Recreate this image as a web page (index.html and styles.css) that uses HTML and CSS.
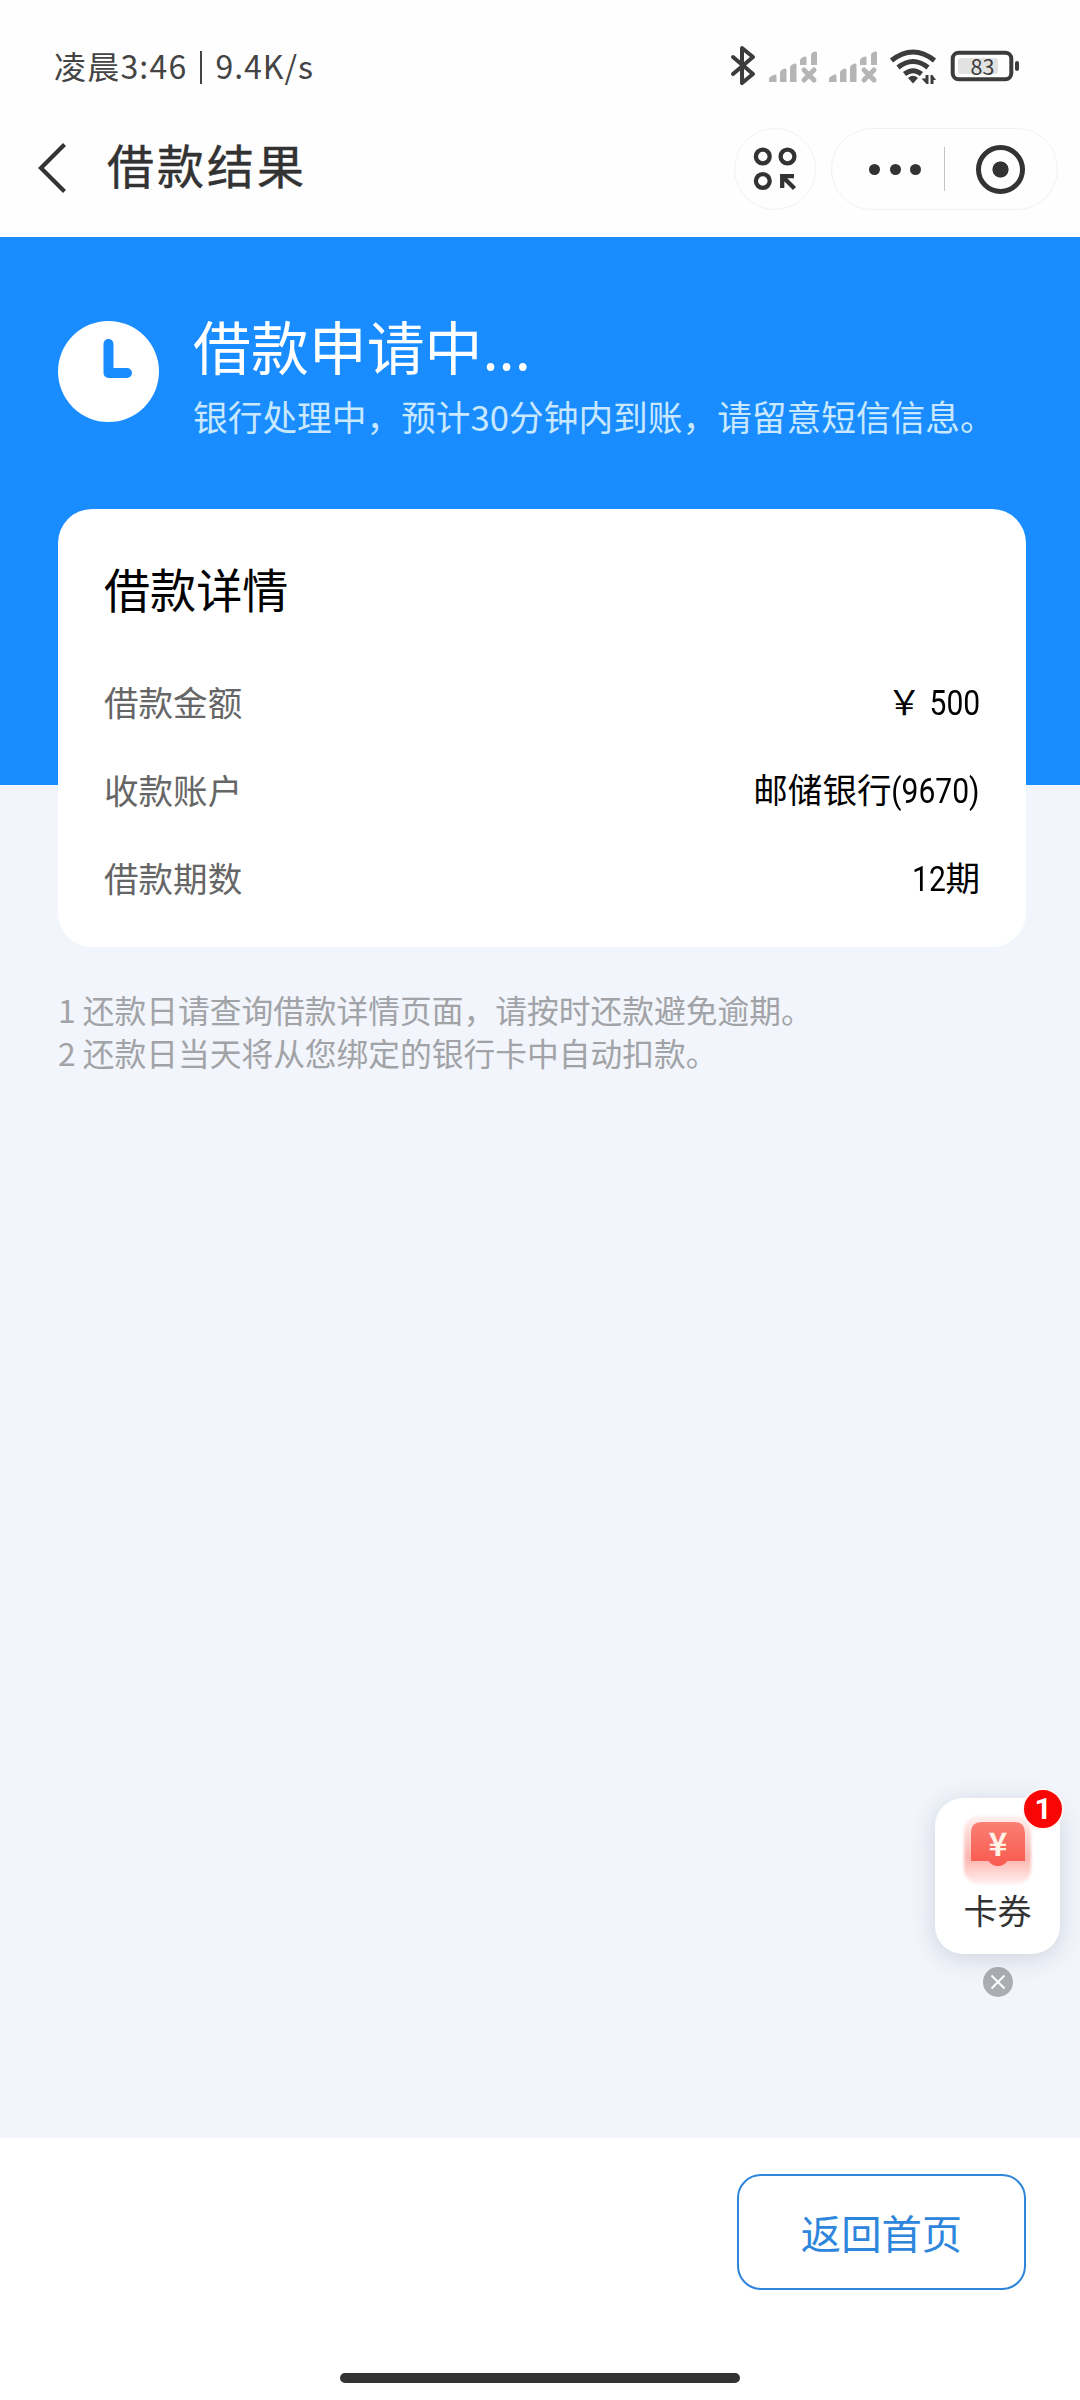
FILE: index.html
```html
<!DOCTYPE html>
<html lang="zh-CN">
<head>
<meta charset="utf-8">
<title>借款结果</title>
<link rel="stylesheet" href="styles.css">
</head>
<body>
<div class="screen">
  <header class="top">
    <div class="status">
      <div class="status-text"><span class="period">凌晨</span><span class="time">3:46</span><span class="bar"></span><span class="rate">9.4K/s</span></div>
      <svg class="status-icons" width="292" height="44" viewBox="728 45 292 44" fill="none">
        <path d="M733 57L753 74L742 83V48L753 57L733 74" stroke="#3c3c3c" stroke-width="4" stroke-linejoin="round" stroke-linecap="round"/>
        <g id="sig" fill="#b5b5b5">
          <path d="M769 82v-3q0-1.500 1.500-2.500l4-2q2-.5 2 1.500v6zM780 82v-9q0-2 1.500-3l3-1.500q2-.5 2 1.500v12zM790 82v-14q0-2 1.500-3l3-1.500q2-.5 2 1.500v17zM800 65v-4q0-2 1.500-3l3-1.500q2-.5 2 1.500v7zM811 65v-10q0-1.500 1.500-2.500l2.500-1q2-.5 2 1.500v12z"/>
          <path d="M804 70L814 80M814 70L804 80" stroke="#b5b5b5" stroke-width="5" stroke-linecap="round"/>
        </g>
        <use href="#sig" x="60"/>
        <g stroke="#3c3c3c" stroke-width="5">
          <path d="M891.500 60.500Q913 43.500 934.500 60.500M898 67.500Q913 55.500 928 67.500M904.500 74Q913 67.500 921.500 74"/>
        </g>
        <path d="M908 78Q913 73.500 918 78L913 83.500Z" fill="#3c3c3c"/>
        <path d="M925.500 75H928.500V84H926.500L921.500 78.500H925.500ZM930.500 75H932.500L936 80H933.500V84H930.500Z" fill="#3c3c3c"/>
        <rect x="958" y="58" width="40" height="16" rx="3" fill="#e2e2e2"/>
        <rect x="952.700" y="52.700" width="58.600" height="26.600" rx="6" stroke="#3c3c3c" stroke-width="4"/>
        <rect x="1015" y="61" width="4" height="10" rx="2" fill="#3c3c3c"/>
        <text x="982.500" y="75" class="battery" text-anchor="middle">83</text>
      </svg>
    </div>
    <nav class="nav">
      <svg class="back" width="30" height="50" viewBox="37 143 30 50" fill="none"><path d="M64.500 144.500L41 168L64.500 191.500" stroke="#333" stroke-width="4.200"/></svg>
      <h1>借款结果</h1>
      <span class="round">
        <svg viewBox="753 147 44 44" fill="none" stroke="#333" stroke-width="4.300">
          <circle cx="762.800" cy="156.500" r="6.900"/><circle cx="787.500" cy="156.500" r="6.900"/><circle cx="762.800" cy="181" r="6.900"/>
          <path d="M782.200 188V176.200H794M783 177L794.500 188.500"/>
        </svg>
      </span>
      <span class="capsule">
        <span class="dots"><i></i><i></i><i></i></span>
        <span class="rule"></span>
        <span class="target"></span>
      </span>
    </nav>
  </header>

  <main class="content">
    <section class="result">
      <svg width="101" height="101" viewBox="0 0 101 101"><circle cx="50.500" cy="50.500" r="50.500" fill="#fff"/><path d="M50.500 23V52H69" fill="none" stroke="#198cff" stroke-width="10" stroke-linecap="round" stroke-linejoin="round"/></svg>
      <div class="result-text">
        <h2>借款申请中...</h2>
        <p>银行处理中，预计30分钟内到账，请留意短信信息。</p>
      </div>
    </section>
    <section class="card">
      <h3>借款详情</h3>
      <dl>
        <div><dt>借款金额</dt><dd>￥ <span class="num amount">500</span></dd></div>
        <div><dt>收款账户</dt><dd>邮储银行<span class="num account">(9670)</span></dd></div>
        <div><dt>借款期数</dt><dd><span class="num terms">12</span>期</dd></div>
      </dl>
    </section>
    <div class="notes">
      <p>1 还款日请查询借款详情页面，请按时还款避免逾期。</p>
      <p>2 还款日当天将从您绑定的银行卡中自动扣款。</p>
    </div>
    <aside class="float">
      <div class="coupon">
        <span class="badge">1</span>
        <svg width="77" height="77" viewBox="-4 -4 77 77">
          <defs>
            <linearGradient id="red" x1="0" y1="0" x2="0" y2="1"><stop offset="0" stop-color="#fa7f72"/><stop offset="1" stop-color="#f85a4f"/></linearGradient>
            <linearGradient id="pink" x1="0" y1="0" x2="0" y2="1"><stop offset="0" stop-color="#fff1ef"/><stop offset=".62" stop-color="#fcb4ae"/><stop offset="1" stop-color="#fff0ee"/></linearGradient>
            <filter id="soft" x="-10%" y="-10%" width="120%" height="120%"><feGaussianBlur stdDeviation="1.500"/></filter>
          </defs>
          <rect x="1" y="1" width="67" height="68" rx="15" fill="url(#pink)" filter="url(#soft)"/>
          <path d="M8 46V18Q8 7 19 7H51Q62 7 62 18V46H44.500Q41 51 35 51T25.500 46Z" fill="url(#red)"/>
          <text x="35" y="41" class="yen" text-anchor="middle">¥</text>
        </svg>
        <span class="coupon-label">卡券</span>
      </div>
      <svg class="close" width="30" height="30" viewBox="0 0 30 30"><circle cx="15" cy="15" r="15" fill="#aaadb1"/><path d="M8.500 8.500L21.500 21.500M21.500 8.500L8.500 21.500" stroke="#fff" stroke-width="2"/></svg>
    </aside>
  </main>

  <footer class="footer">
    <button class="home">返回首页</button>
    <div class="indicator"></div>
  </footer>
</div>
</body>
</html>
```
FILE: styles.css
```css
* { box-sizing: border-box; margin: 0; padding: 0; }
body { font-family: "Noto Sans CJK SC", sans-serif; background: #fff; }
h1, h2, h3 { font-weight: 400; }
svg { display: block; flex: none; }
.screen { width: 1080px; height: 2400px; display: flex; flex-direction: column; overflow: hidden; background: #fefefe; }

.top { height: 237px; flex: none; }
.status { height: 89px; padding: 45px 60px 0 54px; display: flex; justify-content: space-between; }
.status-text { height: 44px; display: flex; align-items: center; font-size: 32px; line-height: 44px; color: #444; }
.status-text .period, .status-text .time, .status-text .rate { margin-top: -4px; }
.period { letter-spacing: 1.200px; }
.time { letter-spacing: 1.200px; }
.bar { width: 2px; height: 33px; margin: 0 13px; background: #444; }
.rate { letter-spacing: 1px; }
.battery { font-family: "Noto Sans CJK SC", sans-serif; font-size: 21.500px; fill: #3c3c3c; }

.nav { height: 148px; padding: 39px 22px 0 37px; display: flex; align-items: flex-start; }
.back { margin-top: 15px; }
.nav h1 { margin: 2px auto 0 40px; font-size: 47px; line-height: 68px; letter-spacing: 3px; color: #333; -webkit-text-stroke: .4px #333; }
.round, .capsule { height: 82px; border: 1.500px solid #f1f1f1; border-radius: 41px; display: flex; align-items: center; }
.round { width: 82px; justify-content: center; margin-right: 15px; }
.round svg { width: 44px; height: 44px; }
.capsule { width: 227px; padding-left: 37px; }
.dots { display: flex; gap: 9.700px; }
.dots i { width: 11px; height: 11px; border-radius: 50%; background: #333; }
.rule { width: 1px; height: 44px; margin: 0 31px 0 23px; background: #c4c4c4; }
.target { width: 49px; height: 49px; border: 5.500px solid #333; border-radius: 50%; background: radial-gradient(circle, #333 7.700px, transparent 8.400px); }

.content { flex: none; height: 1901px; position: relative; padding: 0 54px 0 58px; background: linear-gradient(#198cff 0 548px, #f2f5fb 548px); }
.result { height: 272px; padding-top: 84px; display: flex; align-items: flex-start; gap: 34px; }
.result-text { margin-top: -15px; white-space: nowrap; }
.result h2 { font-size: 57.900px; line-height: 78px; color: #fff; }
.result p { margin-top: 6px; font-size: 34.700px; line-height: 52px; color: #c8e8ff; }

.card { height: 438px; padding: 44px 46px 0 46px; border-radius: 34px; background: #fff; }
.card h3 { font-size: 46.080px; line-height: 70px; color: #000; }
.card dl { margin-top: 34px; }
.card dl div { height: 88px; display: flex; align-items: center; justify-content: space-between; font-size: 34.560px; line-height: 52px; }
.card dt { color: #666; }
.card dd { color: #000; white-space: pre; }
/* Condensed figures: squeezed from the right edge, with the freed width taken back by the margin. */
.num { display: inline-block; font-family: Roboto, sans-serif; transform: scaleX(.87); transform-origin: right center; }
.amount { margin-left: -7.600px; }
.account { margin-left: -13px; }
.terms { margin-left: -5px; }

.notes { margin-top: 41px; font-size: 31.740px; line-height: 43px; color: #a1a3a7; }

.float { position: absolute; right: 20px; top: 1561px; width: 125px; display: flex; flex-direction: column; align-items: center; gap: 13px; }
.coupon { position: relative; width: 125px; height: 156px; padding-top: 13px; border-radius: 28px; background: #fff; box-shadow: 0 4px 24px rgba(60, 75, 100, .2); display: flex; flex-direction: column; align-items: center; }
.coupon-label { margin-top: -3px; font-size: 34px; line-height: 50px; color: #333; }
.yen { font-family: "Noto Sans CJK SC", sans-serif; font-weight: 700; font-size: 32px; fill: #fff2e6; }
.badge { position: absolute; top: -10px; right: -4px; width: 42px; height: 42px; border: 2px solid #fff5f3; border-radius: 50%; background: #f90505; color: #fff; font-family: Roboto, sans-serif; font-size: 30px; font-weight: 700; line-height: 37px; text-align: center; }

.footer { flex: 1; padding: 36px 54px 17px; display: flex; flex-direction: column; align-items: flex-end; justify-content: space-between; background: #fff; }
.home { width: 289px; height: 116px; border: 2px solid #2e86dc; border-radius: 24px; background: #fff; font: 40.320px/60px "Noto Sans CJK SC", sans-serif; color: #2e86dc; }
.indicator { align-self: center; width: 400px; height: 10px; border-radius: 5px; background: #333; }
```
